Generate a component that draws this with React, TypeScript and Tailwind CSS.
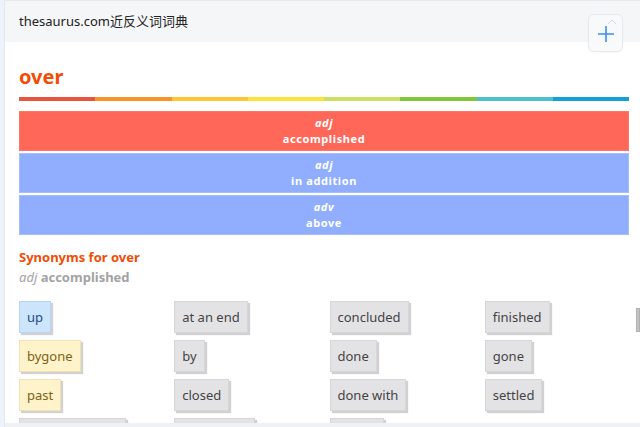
import React from 'react';

type Tone = 'blue' | 'yellow' | 'gray';

interface Synonym {
    word: string;
    tone: Tone;
}

const rainbow = [
    'bg-[#e8553f]',
    'bg-[#f7952a]',
    'bg-[#fcc636]',
    'bg-[#fde43b]',
    'bg-[#cbe164]',
    'bg-[#80c73a]',
    'bg-[#4fbfcd]',
    'bg-[#139fd8]',
];

const senses = [
    { pos: 'adj', meaning: 'accomplished', active: true },
    { pos: 'adj', meaning: 'in addition', active: false },
    { pos: 'adv', meaning: 'above', active: false },
];

const synonyms: Synonym[] = [
    { word: 'up', tone: 'blue' },
    { word: 'at an end', tone: 'gray' },
    { word: 'concluded', tone: 'gray' },
    { word: 'finished', tone: 'gray' },
    { word: 'bygone', tone: 'yellow' },
    { word: 'by', tone: 'gray' },
    { word: 'done', tone: 'gray' },
    { word: 'gone', tone: 'gray' },
    { word: 'past', tone: 'yellow' },
    { word: 'closed', tone: 'gray' },
    { word: 'done with', tone: 'gray' },
    { word: 'settled', tone: 'gray' },
    { word: 'ancient history', tone: 'gray' },
    { word: 'completed', tone: 'gray' },
    { word: 'ended', tone: 'gray' },
];

const toneClass: Record<Tone, string> = {
    blue: 'bg-[#cde4fd] border-[#b9d4f3] text-[#1c4c85]',
    yellow: 'bg-[#fff3cc] border-[#f3e2b0] text-[#7d6216]',
    gray: 'bg-[#e3e3e5] border-[#d6d6d8] text-[#444444]',
};

const Chip: React.FC<{ item: Synonym }> = ({ item }) => (
    <div className="h-[39px]">
        <span
            className={`inline-flex h-[32px] items-center border px-[7px] text-[13px] leading-none shadow-[2px_2px_1px_rgba(0,0,0,0.18)] ${toneClass[item.tone]}`}
        >
            {item.word}
        </span>
    </div>
);

const App: React.FC = () => {
    return (
        <div className="relative flex h-[427px] w-[640px] overflow-hidden bg-[#eef3fb] font-['Noto_Sans','Noto_Sans_CJK_SC',sans-serif]">
            {/* left rail */}
            <div className="w-[5px] shrink-0 border-r border-[#e3e8f0]" />

            <div className="flex min-w-0 flex-1 flex-col bg-white">
                {/* header */}
                <div className="flex h-[42px] shrink-0 items-center border-t border-[#e6e8ec] bg-[#f5f6f8] pl-[14px] text-[13px] text-[#222222]">
                    thesaurus.com近反义词词典
                </div>

                {/* page body */}
                <div className="min-h-0 flex-1 overflow-hidden pl-[14px] pr-[11px]">
                    <h1 className="mt-[20px] text-[20px] font-bold leading-[30px] text-[#f24c05]">
                        over
                    </h1>
                    <div className="mt-[5px] flex h-[4px]">
                        {rainbow.map((c) => (
                            <div key={c} className={`flex-1 ${c}`} />
                        ))}
                    </div>

                    <div className="mt-[10px] flex flex-col gap-[2px]">
                        {senses.map((s) => (
                            <div
                                key={s.meaning}
                                className={`flex h-[40px] flex-col items-center justify-center border text-[11px] font-bold leading-[16px] tracking-[0.6px] text-white ${
                                    s.active
                                        ? 'border-[#ff7566] bg-[#ff6859]'
                                        : 'border-[#a6bdfc] bg-[#91adfd]'
                                }`}
                            >
                                <span className="italic">{s.pos}</span>
                                <span>{s.meaning}</span>
                            </div>
                        ))}
                    </div>

                    <h2 className="mt-[13px] text-[13px] font-bold leading-[18px] text-[#f24c05]">
                        Synonyms for over
                    </h2>
                    <p className="mt-[2px] text-[13px] leading-[18px] text-[#a3a3a3]">
                        <span className="italic">adj</span>{' '}
                        <span className="font-bold">accomplished</span>
                    </p>

                    <div className="mt-[15px] grid w-[621px] grid-cols-4">
                        {synonyms.map((s) => (
                            <Chip key={s.word} item={s} />
                        ))}
                    </div>
                </div>

                {/* bottom strip */}
                <div className="h-[4px] shrink-0 bg-[#f0f1f4]" />
            </div>

            {/* floating add button */}
            <div className="absolute left-[588px] top-[14px] flex h-[38px] w-[35px] items-center justify-center rounded-[6px] border border-[#e8e9ec] bg-[#f8f9fa]/90 shadow-[0_1px_2px_rgba(0,0,0,0.04)]">
                <svg width="18" height="18" viewBox="0 0 18 18" className="mt-[1px]">
                    <path d="M9 1v16M1 9h16" stroke="#3d8df0" strokeWidth="1.6" fill="none" />
                </svg>
                <svg width="10" height="6" viewBox="0 0 10 6" className="absolute right-[5px] top-[4px]">
                    <path d="M1 5l4-4 4 4" stroke="#d4d6da" strokeWidth="1" fill="none" />
                </svg>
            </div>

            {/* scrollbar thumb */}
            <div className="absolute left-[636px] top-[308px] h-[24px] w-[4px] border border-[#b0b0b0] bg-[#c4c4c4]" />
        </div>
    );
};

export default App;
